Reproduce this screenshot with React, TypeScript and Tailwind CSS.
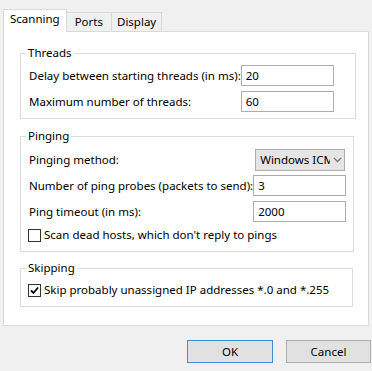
import React from 'react';

const font = { fontFamily: '"Noto Sans", "Segoe UI", sans-serif' };

const TextBox = ({ value, className }: { value: string; className: string }) => (
  <div className={`h-[21px] border border-[#abadb3] bg-white px-[4px] leading-[19px] ${className}`}>
    {value}
  </div>
);

const CheckBox = ({ checked, label }: { checked?: boolean; label: string }) => (
  <div className="flex items-center h-[16px] ml-[-1px]">
    <div className="w-[13px] h-[13px] border border-[#333333] bg-white flex items-center justify-center mr-[3px]">
      {checked && (
        <svg width="9" height="9" viewBox="0 0 9 9">
          <path d="M1 4.5 L3.5 7 L8 1.5" stroke="#000" strokeWidth="1.8" fill="none" />
        </svg>
      )}
    </div>
    <span className="whitespace-nowrap">{label}</span>
  </div>
);

const Group = ({ title, className, children }: { title: string; className?: string; children: React.ReactNode }) => (
  <fieldset className={`border border-[#dcdcdc] pl-[8px] pr-[7px] ${className ?? ''}`}>
    <legend className="ml-[-3px] px-[2px] leading-[16px]">{title}</legend>
    {children}
  </fieldset>
);

export default function App() {
  return (
    <div className="w-[372px] h-[371px] bg-[#f0f0f0] text-[11.5px] text-black overflow-hidden" style={font}>
      {/* tabs */}
      <div className="flex items-end pl-[3px] pt-[9px] h-[31px]">
        <div className="relative z-10 h-[23px] mb-[-1px] border border-b-0 border-[#d9d9d9] bg-white px-[6px] pt-[1px] leading-[16px]">
          Scanning
        </div>
        <div className="h-[19px] border border-b-0 border-l-0 border-[#d9d9d9] bg-[#f0f0f0] px-[8px] leading-[18px]">
          Ports
        </div>
        <div className="h-[19px] border border-b-0 border-l-0 border-[#d9d9d9] bg-[#f0f0f0] px-[5px] leading-[18px]">
          Display
        </div>
      </div>

      {/* panel */}
      <div className="ml-[3px] w-[366px] h-[295px] border border-[#d9d9d9] bg-white pl-[16px] pt-[13px]">
        <Group title="Threads" className="w-[333px] pb-[6px]">
          <div className="flex items-center justify-between mt-[4px]">
            <span className="whitespace-nowrap">Delay between starting threads (in ms):</span>
            <TextBox value="20" className="w-[93px] mr-[14px]" />
          </div>
          <div className="flex items-center justify-between mt-[5px]">
            <span className="whitespace-nowrap">Maximum number of threads:</span>
            <TextBox value="60" className="w-[93px] mr-[14px]" />
          </div>
        </Group>

        <Group title="Pinging" className="w-[333px] mt-[9px] pb-[8px]">
          <div className="flex items-center justify-between mt-[5px]">
            <span>Pinging method:</span>
            <div className="w-[90px] h-[22px] border border-[#acacac] bg-[#e5e5e5] flex items-center mr-[1px] pl-[4px] overflow-hidden">
              <span className="whitespace-nowrap overflow-hidden w-[70px]">Windows ICMP</span>
              <svg width="9" height="6" viewBox="0 0 9 6" className="ml-[3px]">
                <path d="M1 1 L4.5 4.5 L8 1" stroke="#7a7a7a" strokeWidth="1.3" fill="none" />
              </svg>
            </div>
          </div>
          <div className="flex items-center justify-between mt-[4px]">
            <span className="whitespace-nowrap">Number of ping probes (packets to send):</span>
            <TextBox value="3" className="w-[93px]" />
          </div>
          <div className="flex items-center justify-between mt-[5px]">
            <span className="whitespace-nowrap">Ping timeout (in ms):</span>
            <TextBox value="2000" className="w-[93px]" />
          </div>
          <div className="mt-[5px]">
            <CheckBox label="Scan dead hosts, which don't reply to pings" />
          </div>
        </Group>

        <Group title="Skipping" className="w-[333px] mt-[8px] pb-[8px]">
          <div className="mt-[6px]">
            <CheckBox checked label="Skip probably unassigned IP addresses *.0 and *.255" />
          </div>
        </Group>
      </div>

      {/* buttons */}
      <div className="flex justify-end gap-[13px] pr-[1px] mt-[14px]">
        <button className="w-[86px] h-[23px] border border-[#3c8fd8] bg-[#e1e1e1] leading-[21px]">
          OK
        </button>
        <button className="w-[85px] h-[23px] border border-[#adadad] bg-[#e1e1e1] leading-[21px]">
          Cancel
        </button>
      </div>
    </div>
  );
}
